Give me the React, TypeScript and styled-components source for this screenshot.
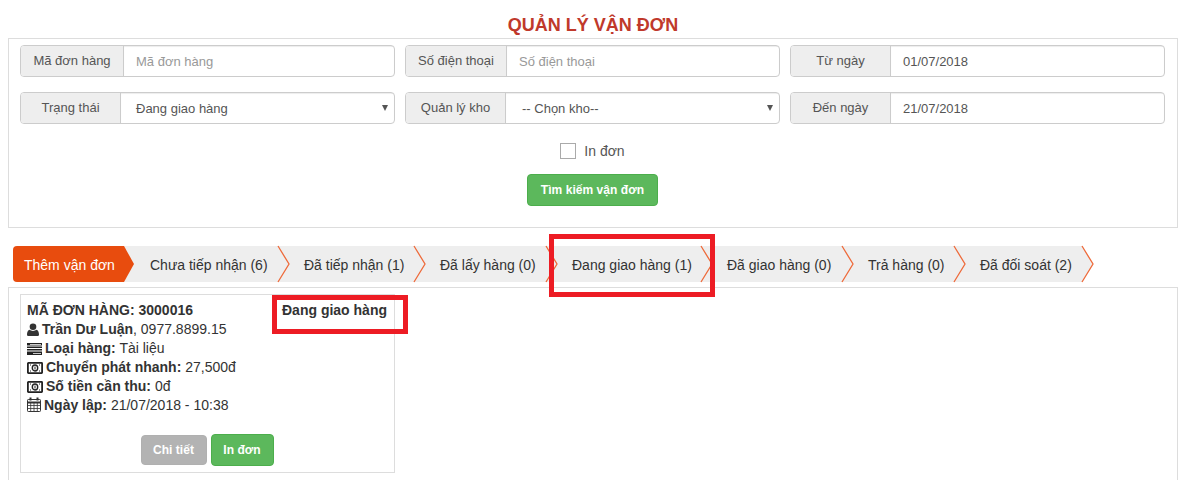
import React from "react";
import styled, { createGlobalStyle } from "styled-components";

const Global = createGlobalStyle`
  html, body { margin: 0; padding: 0; background: #fff; }
  body { font-family: "Liberation Sans", Arial, sans-serif; font-size: 14px; color: #333; height: 480px; overflow: hidden; }
  * { box-sizing: border-box; }
`;

const Page = styled.div`
  width: 1186px;
  height: 480px;
  overflow: hidden;
  padding: 0 8px;
`;
const Title = styled.h1`
  margin: 0;
  height: 38px;
  padding-top: 15px;
  text-align: center;
  font-size: 18px;
  line-height: 20px;
  font-weight: 700;
  color: #c0392b;
`;
const FilterPanel = styled.section`
  width: 1170px;
  height: 190px;
  border: 1px solid #ddd;
  padding: 6px 12px 0 11px;
`;
const FieldGrid = styled.div`
  display: grid;
  grid-template-columns: repeat(3, 375px);
  column-gap: 10px;
  row-gap: 15px;
`;
const Group = styled.div`
  display: flex;
  height: 32px;
  border: 1px solid #ccc;
  border-radius: 4px;
  overflow: hidden;
  font-size: 13px;
`;
const Addon = styled.span<{ $w: number }>`
  flex: 0 0 ${(p) => p.$w}px;
  display: flex;
  align-items: center;
  justify-content: center;
  background: #eee;
  border-right: 1px solid #ccc;
  color: #555;
  padding-bottom: 2px;
`;
const Value = styled.span<{ $placeholder?: boolean; $inset?: number }>`
  flex: 1;
  display: flex;
  align-items: center;
  justify-content: space-between;
  padding: 0 6px 0 ${(p) => p.$inset ?? 12}px;
  color: ${(p) => (p.$placeholder ? "#999" : "#555")};
  box-shadow: inset 0 1px 1px rgba(0, 0, 0, 0.075);
`;
const Caret = styled.i`
  width: 0;
  height: 0;
  border-left: 3.5px solid transparent;
  border-right: 3.5px solid transparent;
  border-top: 6px solid #555;
`;
const CheckRow = styled.label`
  display: flex;
  justify-content: center;
  align-items: center;
  gap: 8px;
  margin-top: 19px;
  height: 16px;
  color: #555;
`;
const CheckBox = styled.i`
  width: 16px;
  height: 16px;
  border: 1px solid #aaa;
  background: #fff;
`;
const SearchRow = styled.div`
  display: flex;
  justify-content: center;
  margin-top: 15px;
`;
const Btn = styled.button<{ $w: number; $h: number; $grey?: boolean }>`
  width: ${(p) => p.$w}px;
  height: ${(p) => p.$h}px;
  padding: 0;
  border: 1px solid ${(p) => (p.$grey ? "#b0b0b0" : "#4cae4c")};
  border-radius: 4px;
  background: ${(p) => (p.$grey ? "#b3b3b3" : "#5cb85c")};
  color: #fff;
  font: 700 12px "Liberation Sans", Arial, sans-serif;
  letter-spacing: 0.05px;
`;
const SteppedBar = styled.nav`
  display: flex;
  height: 36px;
  margin: 18px 0 5px 5px;
`;
const AddStep = styled.div`
  position: relative;
  display: flex;
  align-items: center;
  width: 111px;
  padding: 1px 0 0 11px;
  background: #e84c0e;
  color: #fff;
  border-radius: 4px 0 0 4px;
  &::after {
    content: "";
    position: absolute;
    left: 100%;
    top: 0;
    z-index: 1;
    border-top: 18px solid transparent;
    border-bottom: 18px solid transparent;
    border-left: 10px solid #e84c0e;
  }
`;
const Step = styled.div<{ $w: number }>`
  position: relative;
  display: flex;
  align-items: center;
  width: ${(p) => p.$w}px;
  height: 36px;
  padding: 1px 0 0 26px;
  background: #eee;
  color: #333;
  white-space: nowrap;
`;
const Chevron = styled.svg`
  position: absolute;
  left: 100%;
  top: 0;
  z-index: 1;
  width: 11px;
  height: 36px;
  overflow: visible;
`;
const ListPanel = styled.section`
  width: 1170px;
  height: 300px;
  border: 1px solid #ddd;
  padding: 6px 11px;
`;
const Card = styled.article`
  width: 375px;
  height: 179px;
  border: 1px solid #ddd;
  padding: 6px 7px 0 6px;
`;
const Line = styled.div`
  height: 19px;
  line-height: 19px;
  white-space: nowrap;
  b { font-weight: 700; }
  svg { vertical-align: -2px; margin-right: 3px; }
`;
const CardHead = styled.div`
  display: flex;
  justify-content: space-between;
  height: 19px;
  line-height: 19px;
  font-weight: 700;
`;
const CardActions = styled.div`
  display: flex;
  justify-content: center;
  align-items: center;
  gap: 4px;
  margin-top: 19px;
`;
const Highlight = styled.div<{ $x: number; $y: number; $w: number; $h: number }>`
  position: absolute;
  z-index: 2;
  left: ${(p) => p.$x}px;
  top: ${(p) => p.$y}px;
  width: ${(p) => p.$w}px;
  height: ${(p) => p.$h}px;
  border: 5px solid #ed1c24;
  pointer-events: none;
`;

const UserIcon = () => (
  <svg width="12" height="13" viewBox="0 0 13 14" fill="#333">
    <circle cx="6.5" cy="4" r="3.6" />
    <path d="M1 14c-.6 0-1-.5-1-1.2C0 10 .8 7.6 3 7.3c.8.7 2 1.2 3.5 1.2S9.200 8 10 7.300c2.200.3 3 2.700 3 5.500 0 .7-.4 1.200-1 1.200z" />
  </svg>
);
const ListIcon = () => (
  <svg width="15" height="12" viewBox="0 0 15 12" fill="#222">
    <path d="M0 0h15v2.500H0zM0 3.500h15V5H0zM0 6h15v1.500H0zM0 8.500h15V12H0z" />
    <path fill="#fff" d="M3 1h11v.7H3zM6 10h8v.8H6z" />
  </svg>
);
const MoneyIcon = () => (
  <svg width="16" height="12" viewBox="0 0 16 12" fill="none" stroke="#222">
    <rect x="0.900" y="0.900" width="14.200" height="10.200" rx="0.500" strokeWidth="1.800" />
    <ellipse cx="8" cy="6" rx="2.700" ry="3" strokeWidth="1.400" />
    <path d="M3 3h1M12 3h1M3 9h1M12 9h1" strokeWidth="1.200" />
    <path d="M8 4.500v3" strokeWidth="1" />
  </svg>
);
const CalendarIcon = () => (
  <svg width="14" height="15" viewBox="0 0 14 15" fill="none" stroke="#333">
    <rect x="0.500" y="2.500" width="13" height="12" rx="0.800" strokeWidth="1" />
    <path d="M0 5.500h14" strokeWidth="2" />
    <path d="M3.500 0.500v3M10.500 0.500v3" strokeWidth="2" />
    <path d="M0.500 8.500h13M0.500 11.500h13M3.700 6v8.500M7 6v8.500M10.300 6v8.500" strokeWidth="0.800" />
  </svg>
);

const steps: [string, number][] = [
  ["Chưa tiếp nhận (6)", 154],
  ["Đã tiếp nhận (1)", 136],
  ["Đã lấy hàng (0)", 132],
  ["Đang giao hàng (1)", 155],
  ["Đã giao hàng (0)", 141],
  ["Trả hàng (0)", 112],
  ["Đã đối soát (2)", 128],
];

const fields: { label: string; w: number; value: string; placeholder?: boolean; select?: boolean; inset?: number }[] = [
  { label: "Mã đơn hàng", w: 103, value: "Mã đơn hàng", placeholder: true },
  { label: "Số điện thoại", w: 101, value: "Số điện thoại", placeholder: true },
  { label: "Từ ngày", w: 100, value: "01/07/2018" },
  { label: "Trạng thái", w: 100, value: "Đang giao hàng", select: true, inset: 15 },
  { label: "Quản lý kho", w: 100, value: "-- Chọn kho--", select: true, inset: 16 },
  { label: "Đến ngày", w: 100, value: "21/07/2018" },
];

export default function App() {
  return (
    <Page>
      <Global />
      <Title>QUẢN LÝ VẬN ĐƠN</Title>
      <FilterPanel>
        <FieldGrid>
          {fields.map((f) => (
            <Group key={f.label}>
              <Addon $w={f.w}>{f.label}</Addon>
              <Value $placeholder={f.placeholder} $inset={f.inset}>
                {f.value}
                {f.select && <Caret />}
              </Value>
            </Group>
          ))}
        </FieldGrid>
        <CheckRow>
          <CheckBox />
          In đơn
        </CheckRow>
        <SearchRow>
          <Btn $w={131} $h={32}>Tìm kiếm vận đơn</Btn>
        </SearchRow>
      </FilterPanel>
      <SteppedBar>
        <AddStep>Thêm vận đơn</AddStep>
        {steps.map(([label, w]) => (
          <Step key={label} $w={w}>
            {label}
            <Chevron viewBox="0 0 11 36">
              <path d="M0 0 11 18 0 36" fill="#eee" stroke="#ee6a3a" strokeWidth="1.300" />
            </Chevron>
          </Step>
        ))}
      </SteppedBar>
      <ListPanel>
        <Card>
          <CardHead>
            <span>MÃ ĐƠN HÀNG: 3000016</span>
            <span>Đang giao hàng</span>
          </CardHead>
          <Line><UserIcon /><b>Trần Dư Luận</b>, 0977.8899.15</Line>
          <Line><ListIcon /><b>Loại hàng:</b> Tài liệu</Line>
          <Line><MoneyIcon /><b>Chuyển phát nhanh:</b> 27,500đ</Line>
          <Line><MoneyIcon /><b>Số tiền cần thu:</b> 0đ</Line>
          <Line><CalendarIcon /><b>Ngày lập:</b> 21/07/2018 - 10:38</Line>
          <CardActions>
            <Btn $w={66} $h={30} $grey>Chi tiết</Btn>
            <Btn $w={63} $h={32}>In đơn</Btn>
          </CardActions>
        </Card>
      </ListPanel>
      <Highlight $x={549} $y={234} $w={166} $h={63} />
      <Highlight $x={272} $y={295} $w={136} $h={39} />
    </Page>
  );
}
